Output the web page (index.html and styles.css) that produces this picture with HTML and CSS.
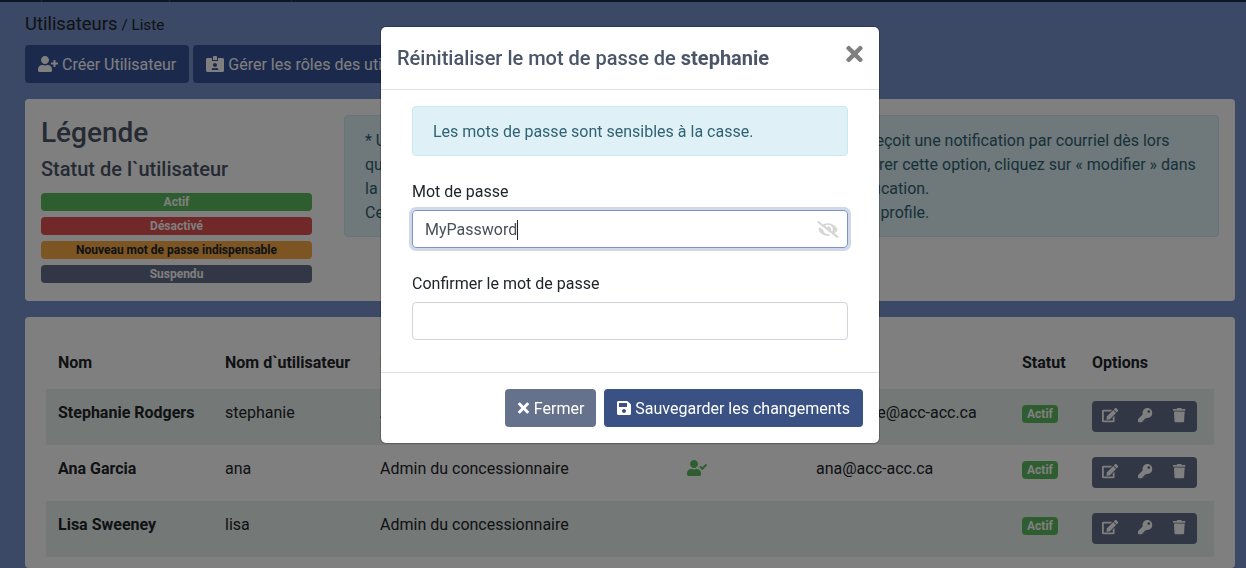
FILE: index.html
```html
<!DOCTYPE html>
<html lang="fr">
<head>
<meta charset="utf-8">
<title>Utilisateurs</title>
<link rel="stylesheet" href="styles.css">
</head>
<body>
<svg class="defs" aria-hidden="true">
  <symbol id="i-user-plus" viewBox="0 0 640 512"><path d="M624 208h-64v-64c0-8.8-7.2-16-16-16h-32c-8.8 0-16 7.2-16 16v64h-64c-8.8 0-16 7.2-16 16v32c0 8.8 7.2 16 16 16h64v64c0 8.8 7.2 16 16 16h32c8.8 0 16-7.2 16-16v-64h64c8.8 0 16-7.2 16-16v-32c0-8.8-7.2-16-16-16zm-400 48c70.7 0 128-57.3 128-128S294.7 0 224 0 96 57.3 96 128s57.3 128 128 128zm89.6 32h-16.7c-22.2 10.2-46.9 16-72.9 16s-50.6-5.8-72.9-16h-16.7C60.2 288 0 348.2 0 422.4V464c0 26.5 21.5 48 48 48h352c26.5 0 48-21.5 48-48v-41.6c0-74.2-60.2-134.4-134.4-134.4z"/></symbol>
  <symbol id="i-user-check" viewBox="0 0 640 512"><path d="M224 256c70.7 0 128-57.3 128-128S294.7 0 224 0 96 57.3 96 128s57.3 128 128 128zm89.6 32h-16.7c-22.2 10.2-46.9 16-72.9 16s-50.6-5.8-72.9-16h-16.7C60.2 288 0 348.2 0 422.4V464c0 26.5 21.5 48 48 48h352c26.5 0 48-21.5 48-48v-41.6c0-74.2-60.2-134.4-134.4-134.4zm323-128.4l-27.8-28.1c-4.6-4.7-12.1-4.7-16.8-.1l-104.8 104-45.5-45.8c-4.6-4.7-12.1-4.7-16.8-.1l-28.1 27.9c-4.7 4.6-4.7 12.1-.1 16.8l81.7 82.3c4.6 4.7 12.1 4.7 16.8.1l141.3-140.2c4.6-4.7 4.7-12.2.1-16.8z"/></symbol>
  <symbol id="i-id-card" viewBox="0 0 576 512"><path d="M528 64H384v96H192V64H48C21.5 64 0 85.5 0 112v352c0 26.5 21.5 48 48 48h480c26.5 0 48-21.5 48-48V112c0-26.5-21.5-48-48-48zM288 224c35.3 0 64 28.7 64 64s-28.7 64-64 64-64-28.7-64-64 28.7-64 64-64zm93.3 224H194.7c-10.4 0-18.8-10-15.6-19.8 8.3-25.6 32.4-44.2 60.9-44.2h8.2c12.3 5.1 25.7 8 39.8 8s27.6-2.9 39.8-8h8.2c28.4 0 52.5 18.5 60.9 44.2 3.2 9.8-5.2 19.8-15.6 19.8zM352 32c0-17.7-14.3-32-32-32h-64c-17.7 0-32 14.3-32 32v96h128V32z"/></symbol>
  <symbol id="i-edit" viewBox="0 0 576 512"><path d="M402.6 83.2l90.2 90.2c3.8 3.8 3.8 10 0 13.8L274.4 405.6l-92.8 10.3c-12.4 1.4-22.9-9.1-21.5-21.5l10.3-92.8L388.8 83.2c3.8-3.8 10-3.8 13.8 0zm162-22.9l-48.8-48.8c-15.2-15.2-39.9-15.2-55.2 0l-35.4 35.4c-3.8 3.8-3.8 10 0 13.8l90.2 90.2c3.8 3.8 10 3.8 13.8 0l35.4-35.4c15.2-15.3 15.2-40 0-55.2zM384 346.2V448H64V128h229.8c3.2 0 6.2-1.3 8.5-3.5l40-40c7.6-7.6 2.2-20.5-8.5-20.5H48C21.5 64 0 85.5 0 112v352c0 26.5 21.5 48 48 48h352c26.5 0 48-21.5 48-48V306.2c0-10.7-12.9-16-20.5-8.5l-40 40c-2.2 2.3-3.5 5.3-3.5 8.5z"/></symbol>
  <symbol id="i-key" viewBox="0 0 512 512"><path d="M512 176.001C512 273.203 433.202 352 336 352c-11.22 0-22.19-1.062-32.827-3.069l-24.012 27.014A23.999 23.999 0 0 1 261.223 384H224v40c0 13.255-10.745 24-24 24h-40v40c0 13.255-10.745 24-24 24H24c-13.255 0-24-10.745-24-24v-78.059c0-6.365 2.529-12.47 7.029-16.971l161.802-161.802C163.108 213.814 160 195.271 160 176 160 78.798 238.797.001 335.999 0 433.488-.001 512 78.511 512 176.001zM336 128c0 26.51 21.49 48 48 48s48-21.49 48-48-21.49-48-48-48-48 21.49-48 48z"/></symbol>
  <symbol id="i-trash" viewBox="0 0 448 512"><path d="M432 32H312l-9.4-18.7A24 24 0 0 0 281.1 0H166.8a23.72 23.72 0 0 0-21.4 13.3L136 32H16A16 16 0 0 0 0 48v32a16 16 0 0 0 16 16h416a16 16 0 0 0 16-16V48a16 16 0 0 0-16-16zM53.2 467a48 48 0 0 0 47.9 45h245.8a48 48 0 0 0 47.9-45L416 128H32z"/></symbol>
  <symbol id="i-times" viewBox="0 0 352 512"><path d="M242.72 256l100.07-100.07c12.28-12.28 12.28-32.19 0-44.48l-22.24-22.24c-12.28-12.28-32.19-12.28-44.48 0L176 189.28 75.93 89.21c-12.28-12.28-32.19-12.28-44.48 0L9.21 111.45c-12.28 12.28-12.28 32.19 0 44.48L109.28 256 9.21 356.07c-12.28 12.28-12.28 32.19 0 44.48l22.24 22.24c12.28 12.28 32.2 12.28 44.48 0L176 322.72l100.07 100.07c12.28 12.28 32.2 12.28 44.48 0l22.24-22.24c12.28-12.28 12.28-32.19 0-44.48L242.72 256z"/></symbol>
  <symbol id="i-save" viewBox="0 0 448 512"><path d="M433.941 129.941l-83.882-83.882A48 48 0 0 0 316.118 32H48C21.49 32 0 53.49 0 80v352c0 26.51 21.49 48 48 48h352c26.51 0 48-21.49 48-48V163.882a48 48 0 0 0-14.059-33.941zM224 416c-35.346 0-64-28.654-64-64 0-35.346 28.654-64 64-64s64 28.654 64 64c0 35.346-28.654 64-64 64zm96-304.52V212c0 6.627-5.373 12-12 12H76c-6.627 0-12-5.373-12-12V108c0-6.627 5.373-12 12-12h228.52c3.183 0 6.235 1.264 8.485 3.515l3.48 3.48A11.996 11.996 0 0 1 320 111.48z"/></symbol>
  <symbol id="i-eye-slash" viewBox="0 0 640 512"><path d="M320 400c-75.85 0-137.25-58.71-142.9-133.11L72.2 185.82c-13.79 17.3-26.48 35.59-36.72 55.59a32.35 32.35 0 0 0 0 29.19C89.71 376.41 197.07 448 320 448c26.91 0 52.87-4 77.89-10.46L346 397.39a144.13 144.13 0 0 1-26 2.61zm313.82 58.1l-110.55-85.44a331.25 331.25 0 0 0 81.25-102.07 32.35 32.35 0 0 0 0-29.19C550.29 135.59 442.93 64 320 64a308.15 308.15 0 0 0-147.32 37.7L45.46 3.37A16 16 0 0 0 23 6.18L3.37 31.45A16 16 0 0 0 6.18 53.9l588.36 454.73a16 16 0 0 0 22.46-2.81l19.64-25.27a16 16 0 0 0-2.82-22.45zm-183.72-142l-39.3-30.38A94.75 94.75 0 0 0 416 256a94.76 94.76 0 0 0-121.31-92.21A47.65 47.65 0 0 1 304 192a46.64 46.64 0 0 1-1.54 10l-73.61-56.89A142.31 142.31 0 0 1 320 112a143.92 143.92 0 0 1 144 144c0 21.63-5.29 41.79-13.9 60.11z"/></symbol>
</svg>

<div class="topbar"><span class="tab t1"></span><span class="tab t2"></span><span class="tab t3"></span></div>

<main class="page">
  <div class="crumb"><span class="crumb-main">Utilisateurs</span> <span class="crumb-sub">/ Liste</span></div>
  <div class="actions">
    <a class="btn btn-primary"><svg class="ic ic-userplus"><use href="#i-user-plus"/></svg>Créer Utilisateur</a>
    <a class="btn btn-primary"><svg class="ic ic-idcard"><use href="#i-id-card"/></svg>Gérer les rôles des utilisateurs</a>
  </div>

  <section class="card legend">
    <div class="legend-left">
      <h1>Légende</h1>
      <h2>Statut de l`utilisateur</h2>
      <div class="tag tag-green">Actif</div>
      <div class="tag tag-red">Désactivé</div>
      <div class="tag tag-orange">Nouveau mot de passe indispensable</div>
      <div class="tag tag-slate">Suspendu</div>
    </div>
    <div class="note">
      <div>* Un utilisateur dont l'option de notification par courriel est bien activée reçoit une notification par courriel dès lors</div>
      <div>qu'un nouveau compte utilisateur est créé dans le système. Pour configurer cette option, cliquez sur « modifier » dans</div>
      <div>la liste des utilisateurs, puis cochez ou décochez la case pour cette notification.</div>
      <div>Cet utilisateur peut aussi modifier cette option à partir de la page de son profile.</div>
    </div>
  </section>

  <section class="card list">
    <table class="users">
      <thead>
        <tr><th class="c-name">Nom</th><th class="c-user">Nom d`utilisateur</th><th class="c-role">Rôle</th><th class="c-notif">Notification</th><th class="c-mail">Courriel</th><th class="c-stat">Statut</th><th>Options</th></tr>
      </thead>
      <tbody>
        <tr class="odd"><td class="strong">Stephanie Rodgers</td><td>stephanie</td><td>Admin du concessionnaire</td><td></td><td>stephanie@acc-acc.ca</td><td><span class="pill">Actif</span></td><td><div class="opts"><svg class="oi oi-edit"><use href="#i-edit"/></svg><svg class="oi oi-key"><use href="#i-key"/></svg><svg class="oi oi-trash"><use href="#i-trash"/></svg></div></td></tr>
        <tr><td class="strong">Ana Garcia</td><td>ana</td><td>Admin du concessionnaire</td><td><svg class="check"><use href="#i-user-check"/></svg></td><td>ana@acc-acc.ca</td><td><span class="pill">Actif</span></td><td><div class="opts"><svg class="oi oi-edit"><use href="#i-edit"/></svg><svg class="oi oi-key"><use href="#i-key"/></svg><svg class="oi oi-trash"><use href="#i-trash"/></svg></div></td></tr>
        <tr class="odd"><td class="strong">Lisa Sweeney</td><td>lisa</td><td>Admin du concessionnaire</td><td></td><td></td><td><span class="pill">Actif</span></td><td><div class="opts"><svg class="oi oi-edit"><use href="#i-edit"/></svg><svg class="oi oi-key"><use href="#i-key"/></svg><svg class="oi oi-trash"><use href="#i-trash"/></svg></div></td></tr>
      </tbody>
    </table>
  </section>
</main>

<div class="backdrop"></div>

<div class="modal" role="dialog">
  <header class="modal-head">
    <h5>Réinitialiser le mot de passe de <strong>stephanie</strong></h5>
    <svg class="close"><use href="#i-times"/></svg>
  </header>
  <div class="modal-body">
    <div class="info">Les mots de passe sont sensibles à la casse.</div>
    <div class="field">
      <label>Mot de passe</label>
      <div class="input focus"><span class="val">MyPassword</span><span class="caret"></span><svg class="eye"><use href="#i-eye-slash"/></svg></div>
    </div>
    <div class="field">
      <label>Confirmer le mot de passe</label>
      <div class="input"></div>
    </div>
  </div>
  <footer class="modal-foot">
    <a class="btn btn-grey"><svg class="ic ic-x"><use href="#i-times"/></svg>Fermer</a>
    <a class="btn btn-blue"><svg class="ic ic-save"><use href="#i-save"/></svg>Sauvegarder les changements</a>
  </footer>
</div>
</body>
</html>
```
FILE: styles.css
```css
* { box-sizing: border-box; }
html, body { height: 100%; }
body {
  margin: 0;
  height: 568px;
  overflow: hidden;
  background: #7690cc;
  color: #212529;
  font-family: Roboto, "Liberation Sans", sans-serif;
  font-size: 16px;
  line-height: 24px;
}
.defs { display: none; }

.topbar { height: 2px; background: #1a2a4e; display: flex; }
.tab { border-right: 1px solid #3a5184; height: 2px; }
.t1 { width: 42px; }
.t2 { width: 128px; }
.t3 { width: 122px; }

.page { padding: 0 11px 0 25px; }
.crumb { height: 43px; padding-top: 10px; line-height: 24px; }
.crumb-main { font-size: 18.4px; }
.crumb-sub { font-size: 15.2px; }

.actions { display: flex; gap: 4px; height: 38px; margin-bottom: 16px; }
.btn {
  display: inline-flex;
  align-items: center;
  height: 38px;
  padding: 2px 13px 0;
  border-radius: 4px;
  color: #fff;
  white-space: nowrap;
}
.btn-primary { background: #365499; }
.ic { fill: currentColor; flex: none; margin-top: -2px; }
.ic-userplus { width: 20px; height: 16px; margin-right: 4px; }
.ic-idcard { width: 18px; height: 16px; margin-right: 4px; }

.card { background: #fff; border-radius: 4px; }
.legend { height: 202px; padding: 16px; display: flex; margin-bottom: 16px; }
.legend-left { width: 271px; flex: none; margin-right: 32px; }
h1 { margin: 0; font-size: 28px; line-height: 36px; font-weight: 500; color: #4a5568; }
h2 { margin: 5px 0 11px; font-size: 20px; line-height: 26px; font-weight: 500; color: #4a5568; }
.tag {
  height: 18px;
  margin-bottom: 6px;
  border-radius: 4px;
  text-align: center;
  font-size: 12px;
  line-height: 18px;
  font-weight: 700;
  color: #fff;
}
.tag-green { background: #5cbb5e; }
.tag-red { background: #e05050; }
.tag-orange { background: #f8ab47; color: #212529; }
.tag-slate { background: #656e8a; }

.note {
  flex: 1;
  height: 122px;
  background: #dff1f6;
  border: 1px solid #c9e8f0;
  border-radius: 4px;
  padding: 13px 20px;
  color: #2f6273;
  white-space: nowrap;
  overflow: hidden;
}

.list { padding: 24px 21px 0; height: 251px; }
.users { width: 1168px; border-collapse: collapse; table-layout: fixed; }
.users th { height: 47.5px; vertical-align: top; text-align: left; padding: 10px 12px 0; font-weight: 700; color: #212529; font-size: 16px; }
.users td { height: 56px; padding: 12px 12px 0; vertical-align: top; }
.c-name { width: 167px; }
.c-user { width: 155px; }
.c-role { width: 307px; color: #f8ab47 !important; }
.c-notif { width: 129px; visibility: hidden; }
.c-mail { width: 206px; visibility: hidden; }
.c-stat { width: 70px; }
.odd { background: #e9f0ed; }
.strong { font-weight: 700; }
.check { width: 20px; height: 16px; fill: #5cbb5e; display: block; margin-top: 3px; }
.pill {
  display: block;
  width: fit-content;
  height: 18px;
  margin-top: 4px;
  padding: 0 5px;
  border-radius: 4px;
  background: #5cbb5e;
  color: #fff;
  font-size: 12px;
  line-height: 18px;
  font-weight: 700;
}
.opts {
  width: 105px;
  height: 31px;
  background: #656e8a;
  border-radius: 4px;
  display: flex;
  align-items: center;
  gap: 20.2px;
  padding: 0 10px 1px;
}
.oi { height: 14.4px; fill: #fff; flex: none; }
.oi-edit { width: 16.2px; }
.oi-key { width: 14.4px; }
.oi-trash { width: 12.6px; }

.backdrop { position: fixed; inset: 0; background: rgba(0, 0, 0, .5); }

.modal {
  position: fixed;
  left: 381px;
  top: 27px;
  width: 498px;
  height: 416px;
  background: #fff;
  border-radius: 5px;
  box-shadow: 0 0 0 1px rgba(0, 0, 0, .2);
}
.modal-head {
  height: 63px;
  border-bottom: 1px solid #dee2e6;
  display: flex;
  align-items: center;
  justify-content: space-between;
  padding: 0 16px;
}
h5 { margin: 0; font-size: 20px; line-height: 24px; font-weight: 500; color: #4a5568; }
h5 strong { font-weight: 700; }
.close { width: 17px; height: 24px; fill: #7f7f7f; margin: -8px 0 0; }
.modal-body { height: 283px; border-bottom: 1px solid #dee2e6; padding: 16px 31px; }
.info {
  height: 50px;
  background: #dff1f6;
  border: 1px solid #c9e8f0;
  border-radius: 4px;
  padding: 13px 20px;
  color: #2f6273;
  margin-bottom: 24px;
}
.field { margin-bottom: 24px; }
label { display: block; height: 24px; margin-bottom: 6px; }
.input {
  height: 38px;
  border: 1px solid #ced4da;
  border-radius: 4px;
  display: flex;
  align-items: center;
  padding: 1px 12px 0;
  color: #495057;
  position: relative;
}
.input.focus { border-color: #7a93cc; box-shadow: 0 0 0 3px #d1d8e7; }
.caret { width: 1px; height: 20px; background: #212529; }
.eye { position: absolute; right: 8px; top: 10px; width: 22px; height: 17px; fill: #d6d6d6; }

.modal-foot {
  display: flex;
  justify-content: flex-end;
  gap: 8px;
  padding: 16px;
}
.btn-grey { background: #66728c; padding: 2px 12px 0 13px; }
.btn-blue { background: #3a5184; padding: 2px 13px 0; }
.ic-x { width: 11px; height: 16px; margin-right: 5px; }
.ic-save { width: 14px; height: 16px; margin-right: 4px; }
```
